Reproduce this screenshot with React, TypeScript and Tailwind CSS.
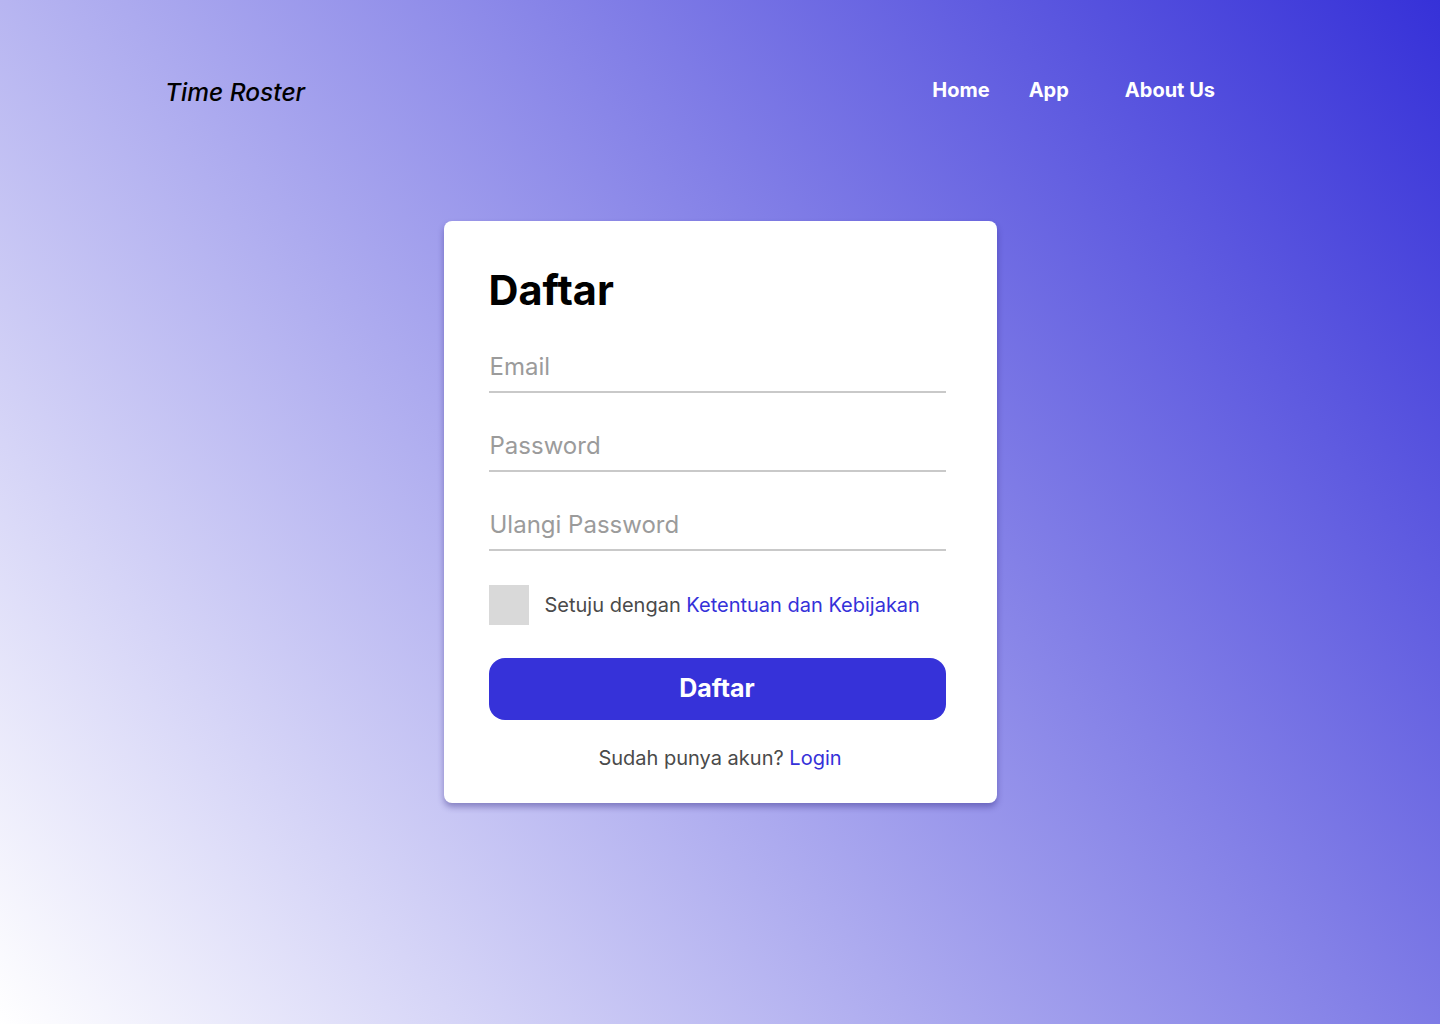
export default function App() {
  return (
    <div
      className="min-h-screen w-full bg-[linear-gradient(52deg,#ffffff_0%,#3631d8_100%)] font-['Inter',sans-serif]"
    >
      {/* Header */}
      <header className="flex items-center justify-between pl-[165px] pr-[225px] pt-[76px]">
        <span className="text-[24.5px] leading-[32px] font-medium italic text-black">Time Roster</span>
        <nav className="flex items-center text-[20px] font-bold text-white -mt-[5px]">
          <a className="mr-[39px]">Home</a>
          <a className="mr-[56px]">App</a>
          <a>About Us</a>
        </nav>
      </header>

      {/* Register card */}
      <div className="flex justify-center pt-[113px] pb-[222px]">
        <div className="w-[553px] rounded-[8px] bg-white pl-[45px] pr-[51px] pt-[43px] pb-[30px] shadow-[0_4px_6px_rgba(40,30,120,0.4)]">
          <h1 className="text-[41.5px] leading-[52px] font-bold text-black">Daftar</h1>

          <div className="mt-[28px] flex flex-col gap-[30px]">
            {["Email", "Password", "Ulangi Password"].map((p) => (
              <div key={p} className="border-b-2 border-[#c9c9c9] pt-[3px] pb-[5px]">
                <input
                  placeholder={p}
                  type={p === "Email" ? "email" : "password"}
                  className="w-full bg-transparent px-[1px] text-[24px] leading-[39px] text-black outline-none placeholder:text-[#9b9b9b]"
                />
              </div>
            ))}
          </div>

          <div className="mt-[34px] flex items-center gap-[16px]">
            <div className="h-[40px] w-[40px] bg-[#d9d9d9]" />
            <p className="text-[20px] text-[#4a4a4a]">
              Setuju dengan <a className="text-[#3531d9]">Ketentuan dan Kebijakan</a>
            </p>
          </div>

          <button className="mt-[33px] h-[62px] w-full rounded-[16px] bg-[#3632d9] text-[25px] font-bold text-white">
            Daftar
          </button>

          <p className="mt-[23px] -mr-[6px] text-center text-[20px] leading-[30px] text-[#4a4a4a]">
            Sudah punya akun? <a className="text-[#3531d9]">Login</a>
          </p>
        </div>
      </div>
    </div>
  )
}
